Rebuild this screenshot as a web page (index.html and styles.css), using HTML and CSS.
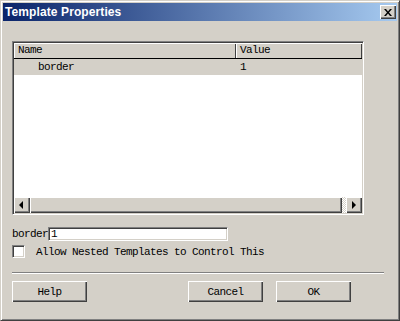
FILE: index.html
```html
<!DOCTYPE html>
<html lang="en">
<head>
    <meta charset="UTF-8">
    <title>Template Properties</title>
    <link rel="stylesheet" href="styles.css">
</head>
<body>
    <div class="window">
        <div class="titlebar">
            <span class="title">Template Properties</span>
            <button class="close">
                <svg width="8" height="7" viewBox="0 0 8 7">
                    <path d="M0 0h2l2 2.5L6 0h2L5 3.5 8 7H6L4 4.5 2 7H0l3-3.5z" fill="#000"/>
                </svg>
            </button>
        </div>

        <div class="content">
            <div class="listbox">
                <div class="list-head">
                    <div class="col-name">Name</div>
                    <div class="col-value">Value</div>
                </div>
                <div class="list-body">
                    <div class="row selected">
                        <div class="cell-name">border</div>
                        <div class="cell-value">1</div>
                    </div>
                </div>
                <div class="hscroll">
                    <div class="arrow-btn"><span class="tri-left"></span></div>
                    <div class="thumb"></div>
                    <div class="track"></div>
                    <div class="arrow-btn"><span class="tri-right"></span></div>
                </div>
            </div>

            <div class="field-row">
                <label class="field-label">border</label>
                <div class="textbox">1</div>
            </div>

            <div class="check-row">
                <span class="checkbox"></span>
                <span class="check-label">Allow Nested Templates to Control This</span>
            </div>

            <div class="separator"></div>

            <div class="btn-row">
                <button class="btn">Help</button>
                <div class="spacer"></div>
                <button class="btn">Cancel</button>
                <button class="btn btn-ok">OK</button>
            </div>
        </div>
    </div>
</body>
</html>
```

FILE: styles.css
```css
body {
    margin: 0;
    background: #d4d0c8;
}
.window {
    width: 400px;
    height: 321px;
    box-sizing: border-box;
    background: #d4d0c8;
    border-top: 1px solid #d4d0c8;
    border-left: 1px solid #d4d0c8;
    border-right: 1px solid #404040;
    border-bottom: 1px solid #404040;
    box-shadow: inset 1px 1px #fff, inset -1px -1px #808080;
    padding: 2px;
    display: flex;
    flex-direction: column;
    font-family: "Liberation Mono", monospace;
    font-size: 11px;
    letter-spacing: -0.6px;
    color: #000;
}
.titlebar {
    height: 18px;
    background: linear-gradient(to right, #0a246a, #a6caf0);
    display: flex;
    align-items: center;
    padding: 0 1px 0 2px;
}
.title {
    flex: 1;
    color: #fff;
    font-family: "Liberation Sans", Arial, sans-serif;
    font-weight: bold;
    font-size: 12px;
    letter-spacing: 0.1px;
}
.close {
    width: 16px;
    height: 14px;
    padding: 0;
    margin: 0;
    background: #d4d0c8;
    border: none;
    box-shadow: inset 1px 1px #fff, inset -1px -1px #404040, inset -2px -2px #808080;
    display: flex;
    align-items: center;
    justify-content: center;
}
.close svg {
    display: block;
    margin-left: -1px;
}
.content {
    flex: 1;
    padding: 20px 13px 0 9px;
    display: flex;
    flex-direction: column;
}

/* list view */
.listbox {
    width: 352px;
    height: 174px;
    box-sizing: border-box;
    border-top: 1px solid #808080;
    border-left: 1px solid #808080;
    border-right: 1px solid #fff;
    border-bottom: 1px solid #fff;
    box-shadow: inset 1px 1px #404040, inset -1px -1px #d4d0c8;
    padding: 1px;
    background: #fff;
    display: flex;
    flex-direction: column;
}
.list-head {
    display: flex;
    height: 15px;
    border-bottom: 1px solid #000;
    background: #d4d0c8;
}
.list-head div {
    box-sizing: border-box;
    height: 15px;
    line-height: 14px;
    padding-left: 4px;
    box-shadow: inset 1px 1px #fff, inset -1px 0 #404040;
}
.col-name {
    width: 222px;
}
.col-value {
    flex: 1;
}
.list-body {
    flex: 1;
}
.row {
    display: flex;
    height: 16px;
    line-height: 16px;
}
.row.selected {
    background: #d4d0c8;
}
.cell-name {
    width: 222px;
    padding-left: 24px;
    box-sizing: border-box;
}
.cell-value {
    padding-left: 4px;
}
.hscroll {
    height: 16px;
    display: flex;
    background: #d4d0c8;
}
.arrow-btn {
    width: 16px;
    height: 16px;
    box-sizing: border-box;
    box-shadow: inset 1px 1px #fff, inset -1px -1px #404040, inset -2px -2px #808080;
    display: flex;
    align-items: center;
    justify-content: center;
}
.tri-left {
    width: 0;
    height: 0;
    border-top: 4px solid transparent;
    border-bottom: 4px solid transparent;
    border-right: 4px solid #000;
    margin-left: -2px;
}
.tri-right {
    width: 0;
    height: 0;
    border-top: 4px solid transparent;
    border-bottom: 4px solid transparent;
    border-left: 4px solid #000;
}
.thumb {
    width: 312px;
    height: 16px;
    box-sizing: border-box;
    box-shadow: inset 1px 1px #fff, inset -1px -1px #404040, inset -2px -2px #808080;
}
.track {
    flex: 1;
    background: repeating-conic-gradient(#fff 0 25%, #d4d0c8 0 50%) 0 0 / 2px 2px;
}

/* fields */
.field-row {
    display: flex;
    align-items: center;
    margin-top: 12px;
    height: 14px;
}
.field-label {
    width: 36px;
}
.textbox {
    width: 180px;
    height: 14px;
    box-sizing: border-box;
    background: #fff;
    border-top: 1px solid #808080;
    border-left: 1px solid #808080;
    border-right: 1px solid #fff;
    border-bottom: 1px solid #fff;
    box-shadow: inset 1px 1px #404040, inset -1px -1px #d4d0c8;
    padding-left: 2px;
    line-height: 12px;
}
.check-row {
    display: flex;
    align-items: center;
    margin-top: 4px;
    height: 13px;
}
.checkbox {
    width: 13px;
    height: 13px;
    box-sizing: border-box;
    background: #fff;
    border-top: 1px solid #808080;
    border-left: 1px solid #808080;
    border-right: 1px solid #fff;
    border-bottom: 1px solid #fff;
    box-shadow: inset 1px 1px #404040, inset -1px -1px #d4d0c8;
}
.check-label {
    margin-left: 11px;
}
.separator {
    margin-top: 14px;
    height: 1px;
    border-top: 1px solid #808080;
    background: #fff;
}
.btn-row {
    display: flex;
    margin-top: 7px;
    padding-right: 33px;
}
.spacer {
    flex: 1;
}
.btn {
    width: 75px;
    height: 21px;
    padding: 0;
    margin: 0;
    background: #d4d0c8;
    border: none;
    box-shadow: inset 1px 1px #fff, inset -1px -1px #404040, inset -2px -2px #808080;
    font-family: "Liberation Mono", monospace;
    font-size: 11px;
    letter-spacing: -0.6px;
    color: #000;
}
.btn-ok {
    margin-left: 13px;
}
```
